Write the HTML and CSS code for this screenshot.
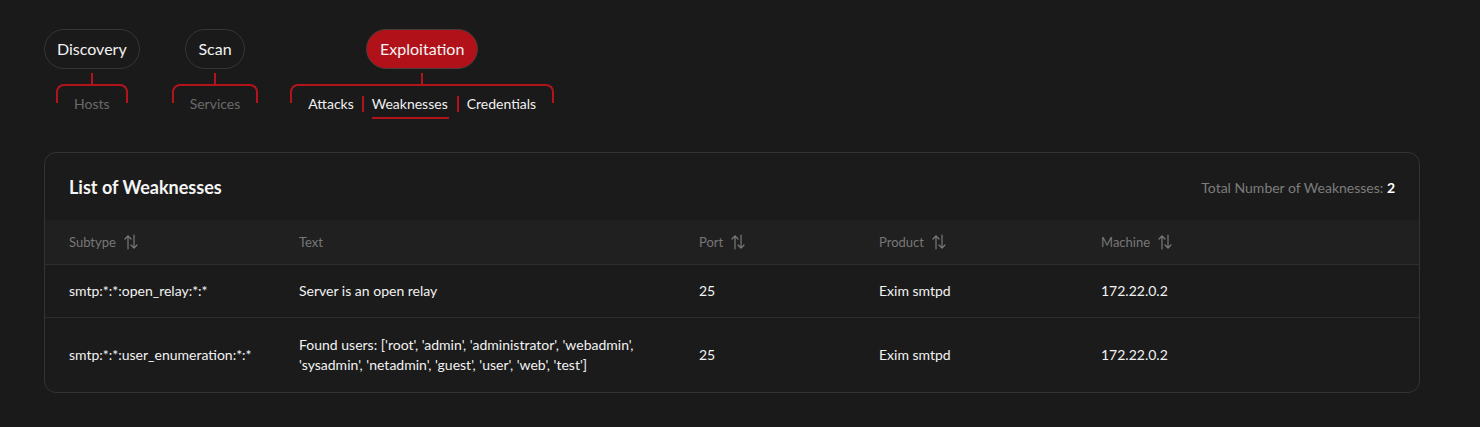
FILE: index.html
```html
<!DOCTYPE html>
<html>
<head>
<meta charset="utf-8">
<link rel="stylesheet" href="styles.css">
</head>
<body>
<div class="page">
  <nav class="steps">
    <div class="step">
      <div class="pill">Discovery</div>
      <div class="connector"></div>
      <div class="sub"><span class="tab muted">Hosts</span></div>
    </div>
    <div class="step">
      <div class="pill">Scan</div>
      <div class="connector"></div>
      <div class="sub"><span class="tab muted">Services</span></div>
    </div>
    <div class="step">
      <div class="pill active">Exploitation</div>
      <div class="connector"></div>
      <div class="sub">
        <span class="tab">Attacks</span>
        <span class="sep"></span>
        <span class="tab current">Weaknesses</span>
        <span class="sep"></span>
        <span class="tab">Credentials</span>
      </div>
    </div>
  </nav>

  <section class="card">
    <div class="card-head">
      <h2 class="title">List of Weaknesses</h2>
      <div class="total">Total Number of Weaknesses: <b>2</b></div>
    </div>
    <div class="row head">
      <div class="cell">Subtype <svg class="sort" viewBox="0 0 14 16" width="14" height="16"><path d="M4 15V2M1 5l3-3.2L7 5" /><path d="M10 1v13M7 11l3 3.2 3-3.2" /></svg></div>
      <div class="cell">Text</div>
      <div class="cell">Port <svg class="sort" viewBox="0 0 14 16" width="14" height="16"><path d="M4 15V2M1 5l3-3.2L7 5" /><path d="M10 1v13M7 11l3 3.2 3-3.2" /></svg></div>
      <div class="cell">Product <svg class="sort" viewBox="0 0 14 16" width="14" height="16"><path d="M4 15V2M1 5l3-3.2L7 5" /><path d="M10 1v13M7 11l3 3.2 3-3.2" /></svg></div>
      <div class="cell">Machine <svg class="sort" viewBox="0 0 14 16" width="14" height="16"><path d="M4 15V2M1 5l3-3.2L7 5" /><path d="M10 1v13M7 11l3 3.2 3-3.2" /></svg></div>
    </div>
    <div class="row">
      <div class="cell">smtp:*:*:open_relay:*:*</div>
      <div class="cell">Server is an open relay</div>
      <div class="cell">25</div>
      <div class="cell">Exim smtpd</div>
      <div class="cell">172.22.0.2</div>
    </div>
    <div class="row last">
      <div class="cell">smtp:*:*:user_enumeration:*:*</div>
      <div class="cell text">Found users: ['root', 'admin', 'administrator', 'webadmin', 'sysadmin', 'netadmin', 'guest', 'user', 'web', 'test']</div>
      <div class="cell">25</div>
      <div class="cell">Exim smtpd</div>
      <div class="cell">172.22.0.2</div>
    </div>
  </section>
</div>
</body>
</html>
```
FILE: styles.css
```css
* { box-sizing: border-box; }
html, body {
  margin: 0;
  padding: 0;
  background: #1a1a1a;
  font-family: Lato, "Open Sans", "Liberation Sans", sans-serif;
  color: #ffffff;
}
.page {
  padding: 29px 60px 0 44px;
}
.steps {
  display: flex;
  align-items: flex-start;
  gap: 32px;
}
.step {
  display: flex;
  flex-direction: column;
  align-items: center;
}
.pill {
  height: 40px;
  padding: 0 12px 1px;
  border: 1px solid #363636;
  border-radius: 20px;
  display: flex;
  align-items: center;
  font-size: 16px;
  color: #f2f2f2;
  background: #1a1a1a;
}
.pill.active {
  background: #b1121a;
  border-color: #4a3a3a;
  color: #f4f4f4;
  padding: 0 13px 1px;
}
.connector {
  width: 2px;
  height: 11px;
  margin-top: 4px;
  background: #b3141c;
}
.sub {
  position: relative;
  display: flex;
  align-items: flex-start;
  gap: 8px;
  padding: 11px 18px 0;
  font-size: 14px;
  line-height: 18px;
}
.sub::before {
  content: "";
  position: absolute;
  left: 0;
  right: 0;
  top: 0;
  height: 17px;
  border: 2px solid #b3141c;
  border-bottom: 0;
  border-radius: 8px 8px 0 0;
}
.tab {
  color: #f0f0f0;
  padding-bottom: 4px;
}
.tab.muted { color: #6a6a6a; }
.tab.current {
  border-bottom: 2px solid #b3141c;
  padding: 0 1px 4px 0;
}
.sep {
  width: 2px;
  height: 16px;
  margin-top: 1px;
  background: #b3141c;
}
.card {
  margin-top: 33px;
  width: 1376px;
  border: 1px solid #333333;
  border-radius: 12px;
  background: #1b1b1b;
  overflow: hidden;
}
.card-head {
  display: flex;
  justify-content: space-between;
  align-items: center;
  padding: 23px 24px 22px 24px;
}
.title {
  margin: 0;
  font-size: 18px;
  line-height: 22px;
  font-weight: 700;
  color: #f5f5f5;
}
.total {
  font-size: 14px;
  color: #7d7d7d;
}
.total b {
  color: #ffffff;
  font-size: 14px;
  font-weight: 700;
}
.row {
  display: grid;
  grid-template-columns: 230px 400px 180px 222px 1fr;
  align-items: center;
  padding: 16px 24px;
  font-size: 14px;
  line-height: 20px;
  color: #f2f2f2;
  border-bottom: 1px solid #2e2e2e;
}
.row.last { border-bottom: 0; padding-bottom: 17px; padding-top: 17px; }
.row.head {
  background: #202020;
  padding: 12px 24px 12px;
  color: #777777;
  font-size: 13px;
  border-bottom: 1px solid #2e2e2e;
}
.row.head .cell {
  display: flex;
  align-items: center;
  gap: 8px;
}
.cell.text { padding-right: 28px; }
.sort {
  fill: none;
  stroke: #7a7a7a;
  stroke-width: 1.2;
  stroke-linecap: round;
  stroke-linejoin: round;
}
```
